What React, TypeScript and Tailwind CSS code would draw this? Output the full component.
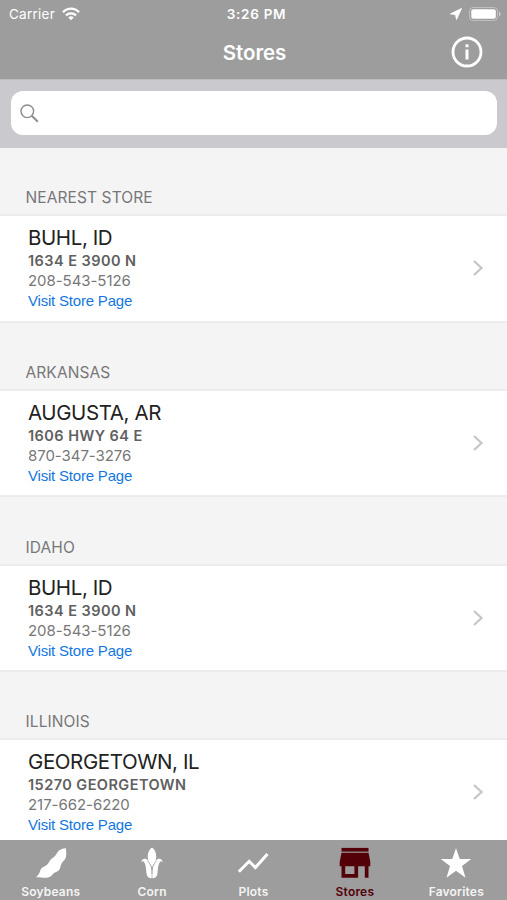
import { useState } from "react"

type Store = {
  section: string
  name: string
  address: string
  phone: string
}

const stores: Store[] = [
  { section: "NEAREST STORE", name: "BUHL, ID", address: "1634 E 3900 N", phone: "208-543-5126" },
  { section: "ARKANSAS", name: "AUGUSTA, AR", address: "1606 HWY 64 E", phone: "870-347-3276" },
  { section: "IDAHO", name: "BUHL, ID", address: "1634 E 3900 N", phone: "208-543-5126" },
  { section: "ILLINOIS", name: "GEORGETOWN, IL", address: "15270 GEORGETOWN", phone: "217-662-6220" },
]

function StatusBar() {
  return (
    <div className="grid h-[27px] grid-cols-3 items-center leading-none">
      <div className="flex items-center gap-[7px] pl-[9px]">
        <span className="pt-[2px] text-[13.5px] tracking-[0.25px]">Carrier</span>
        <svg width="18" height="14" viewBox="0 0 18 14" fill="none" stroke="white" strokeWidth="2.3">
          <path d="M1 5.2C5.5.4 12.5.4 17 5.2" />
          <path d="M4 8.4c2.8-2.8 7.2-2.8 10 0" />
          <path d="M9 13.2 6.3 10.4c1.5-1.4 3.9-1.4 5.4 0z" fill="white" stroke="none" />
        </svg>
      </div>
      <div className="pt-[2px] pl-[6px] text-center text-[13.5px] font-semibold tracking-[0.7px]">3:26 PM</div>
      <div className="flex items-center justify-end gap-[7px] pr-[6px]">
        <svg width="12" height="12" viewBox="0 0 12 12" fill="white" stroke="white" strokeWidth="1" strokeLinejoin="round">
          <path d="M11.400.6.6 5.900l5 .6.9 4.900z" />
        </svg>
        <svg width="32" height="14" viewBox="0 0 32 14">
          <rect x="0.5" y="0.5" width="28" height="13" rx="3.5" fill="none" stroke="white" strokeOpacity="0.35" />
          <rect x="2.3" y="2.3" width="24.5" height="9.4" rx="2" fill="white" />
          <path d="M30 4.5c2 .8 2 4.2 0 5z" fill="white" fillOpacity="0.5" />
        </svg>
      </div>
    </div>
  )
}

function SoybeanIcon() {
  return (
    <svg width="32" height="32" viewBox="0 0 32 32" fill="white">
      <path d="M30.800 1.200C28.500 1 26 2 24 3.600c-1.600 1.300-2.200 3.500-4 5.400-1.700 1.700-4 2.700-5.200 4.800-1 1.800-1.800 3.500-3.800 4.700-1.700 1-3.800 1.500-5 3.500-1.200 2-.9 3-2.300 5.200-.8 1.200-1.800 1.800-2.500 3.100 2.500.5 4.500.3 6.800.4 2.500.1 5 .2 7-.9 1.800-1.100 2.300-2.800 4-3.900 2-1.200 4.500-1.800 5.700-4 1-1.800.7-3.500 1.900-5.500 1.300-2.100 3.500-3.600 4.200-6 .8-2.800.5-6 0-9.200z" />
    </svg>
  )
}

function CornIcon() {
  return (
    <svg width="24" height="32" viewBox="0 0 24 32" fill="white">
      <path d="M12 .6C9.300 2.200 7.700 5.900 7.700 10c0 3.500 1.800 6.900 4.300 10.600 2.500-3.700 4.300-7.100 4.300-10.600 0-4.100-1.600-7.800-4.300-9.400z" />
      <path d="M1.300 15.800c.1-2.900 2-4.500 4.300-4 3.700 1.500 5.800 7.100 6.100 11.400V31.300c-3 0-4.500-1.300-5-4-.8-4.200-.2-9.200-3-12.900-1.100-.2-1.800.4-2.400 1.400z" />
      <path d="M22.700 15.800c-.1-2.900-2-4.500-4.300-4-3.700 1.500-5.800 7.100-6.100 11.400V31.300c3 0 4.500-1.300 5-4 .8-4.200.2-9.200 3-12.900 1.100-.2 1.800.4 2.400 1.400z" />
      <path d="M7.600 14c2.300 2.300 4 5.500 4.400 9 .4-3.500 2.100-6.700 4.400-9M12 22v5" fill="none" stroke="#9d9d9d" strokeWidth="0.8" />
    </svg>
  )
}

function PlotsIcon() {
  return (
    <svg width="32" height="32" viewBox="0 0 32 32" fill="none" stroke="white" strokeWidth="3">
      <path d="M1.800 24.800 12.200 14.300 18.400 20.500 30.500 7" />
    </svg>
  )
}

function StoresIcon() {
  return (
    <svg width="32" height="32" viewBox="0 0 32 32" fill="#540008">
      <path d="M2.500.9h27v3.700h-27z" />
      <path d="M2.500 5.800h27l1.800 9v4.400h-1.800v11.500h-3.700V19.200h-6.700v11.500H2.500V19.200H.7v-4.400zM6.200 19.200v7.700h9.200v-7.700z" fillRule="evenodd" />
    </svg>
  )
}

function StarIcon() {
  return (
    <svg width="32" height="32" viewBox="0 0 32 32" fill="white">
      <path d="M16 .9 19.700 12H31.300L22 19 25.500 30.800 16 23.800 6.500 30.800 10 19 .7 12H12.300z" />
    </svg>
  )
}

const tabs = [
  { label: "Soybeans", icon: SoybeanIcon },
  { label: "Corn", icon: CornIcon },
  { label: "Plots", icon: PlotsIcon },
  { label: "Stores", icon: StoresIcon },
  { label: "Favorites", icon: StarIcon },
]

export default function App() {
  const [activeTab, setActiveTab] = useState("Stores")
  const [search, setSearch] = useState("")

  return (
    <div className="flex h-[900px] w-[507px] flex-col overflow-hidden bg-[#f4f4f4] font-['Inter','Liberation_Sans',sans-serif]">
      {/* status bar and title */}
      <header className="h-[79px] shrink-0 bg-[#9d9d9d] text-white">
        <StatusBar />
        <div className="grid h-[50px] grid-cols-3 items-center">
          <h1 className="col-start-2 pt-[2px] pl-[2px] text-center text-[20.5px] leading-none font-semibold tracking-[-0.1px]">Stores</h1>
          <button className="mr-[24px] justify-self-end" aria-label="Info">
            <svg width="32" height="32" viewBox="0 0 32 32" fill="none" stroke="white">
              <circle cx="16" cy="16" r="14" strokeWidth="2.8" />
              <path d="M16 13.500v10M16 8.300v3" strokeWidth="3" />
            </svg>
          </button>
        </div>
      </header>

      {/* search */}
      <div className="h-[69px] shrink-0 border-t border-[#bdbdc1] bg-[#c9c9ce] px-[10px] pt-[11px]">
        <label className="ml-px flex h-11 items-center rounded-[12px] bg-white pl-[9px]">
          <svg width="19" height="19" viewBox="0 0 19 19" fill="none" stroke="#8e8e93">
            <circle cx="7.3" cy="7.3" r="6.3" strokeWidth="1.4" />
            <path d="m11.800 11.800 6 6" strokeWidth="2" />
          </svg>
          <input
            className="ml-2 flex-1 outline-none"
            value={search}
            onChange={(e) => setSearch(e.target.value)}
          />
        </label>
      </div>

      {/* store list grouped by state */}
      <main className="min-h-0 flex-1 overflow-hidden">
        {stores.map((store) => (
          <section key={store.section} className="flex h-[174.67px] flex-col">
            <h2 className="flex h-[66.3px] items-end pb-[6px] pl-[25.5px] text-[15.5px] leading-[20px] tracking-[0.1px] text-[#77777a]">
              {store.section}
            </h2>
            <div className="flex flex-1 items-center border-y-2 border-[#ececec] bg-white pr-[23px] pl-7">
              <div className="flex-1 pt-[1.5px]">
                <p className="mb-[3px] text-[20.5px] leading-[21px] tracking-[-0.4px] text-[#222222]">{store.name}</p>
                <p className="text-[14.5px] leading-5 font-semibold tracking-[0.45px] text-[#606060]">{store.address}</p>
                <p className="text-[15px] leading-5 tracking-[-0.05px] text-[#777777]">{store.phone}</p>
                <a className="block font-['Liberation_Sans',sans-serif] text-[15px] leading-5 tracking-[-0.2px] text-[#1477e0]">Visit Store Page</a>
              </div>
              <svg width="12" height="18" viewBox="0 0 12 18" fill="none" stroke="#c5c5c8" strokeWidth="2.2">
                <path d="m2 2 7.500 7L2 16" />
              </svg>
            </div>
          </section>
        ))}
      </main>

      {/* bottom tabs */}
      <nav className="grid h-[60px] shrink-0 grid-cols-5 bg-[#9d9d9d]">
        {tabs.map(({ label, icon: Icon }) => (
          <button
            key={label}
            onClick={() => setActiveTab(label)}
            className={`flex flex-col items-center pt-[7px] text-[12px] leading-[14px] font-semibold tracking-[0.2px] ${activeTab === label ? "text-[#540008]" : "text-[#f4f4f4]"}`}
          >
            <Icon />
            <span className="mt-[6px]">{label}</span>
          </button>
        ))}
      </nav>
    </div>
  )
}
